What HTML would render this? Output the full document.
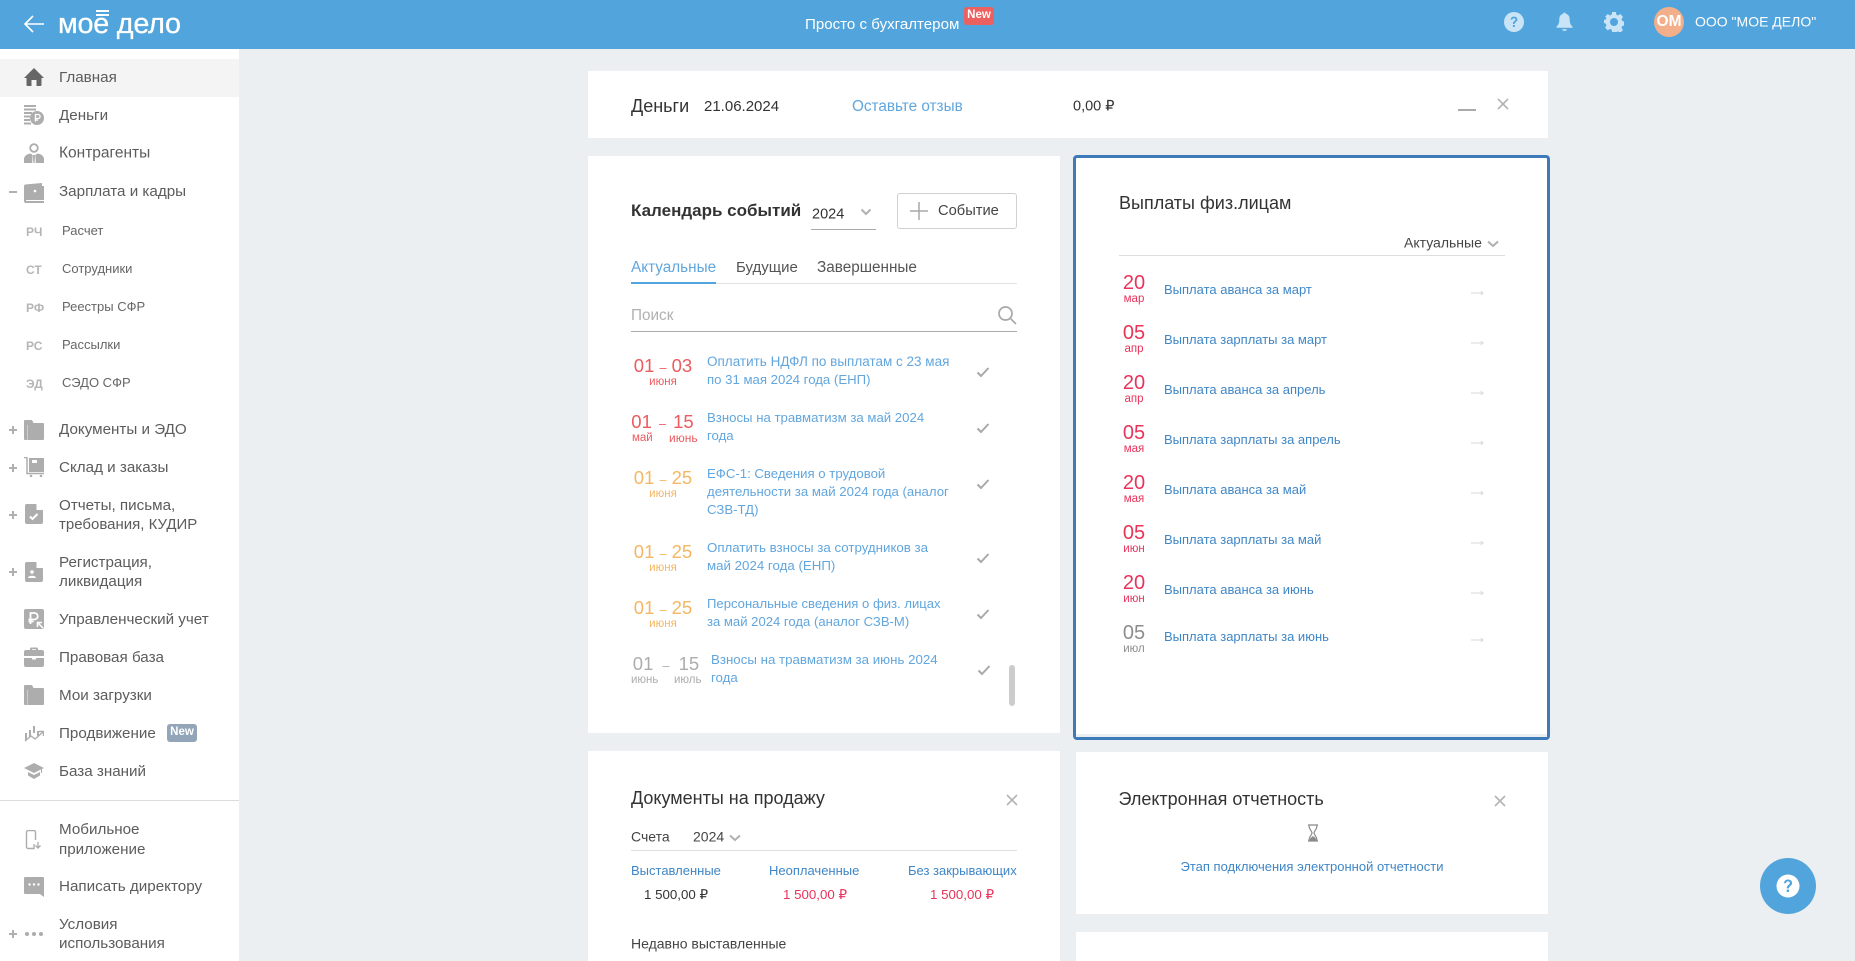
<!DOCTYPE html>
<html lang="ru"><head><meta charset="utf-8"><title>Мое дело</title>
<style>
html,body{margin:0;padding:0;width:1855px;height:961px;overflow:hidden;background:#ebeff2;font-family:"Liberation Sans",sans-serif;color:#333}
.a{position:absolute}
.t{position:absolute;white-space:nowrap;transform:translateY(-50%);line-height:1.2}
.c{transform:translate(-50%,-50%)}
.card{position:absolute;background:#fff}
.n{font-size:15.2px;color:#5c5c5c;left:59px;margin-top:1px}
.s{font-size:13px;color:#666;left:62px}
.k{font-size:12px;color:#b5b5b5;font-weight:bold;left:26px;margin-top:.5px}
.i{position:absolute;left:24px;width:20px;height:20px;fill:#adadad}
.p{position:absolute;left:9px;width:8px;height:2px;background:#b0b0b0}
.p:after{content:"";position:absolute;left:3px;top:-3px;width:2px;height:8px;background:#b0b0b0}
.l{font-size:13.2px;color:#62a6de;line-height:18px;left:707px;transform:none}
.d{font-size:18.5px;text-align:center;margin-top:0}
.d span{font-size:12.5px}
.m{font-size:11.5px;margin-top:1px}
.r{color:#ec5b5f}.o{color:#f4b764}.g{color:#adadad}
.ck{position:absolute;left:976px;width:14px;height:12px;fill:none;stroke:#a8a8a8;stroke-width:2}
.pd{font-size:20px;color:#e8335a;margin-left:1px}
.pm{font-size:11.5px;color:#e8335a;margin-left:1px;margin-top:1px}
.pl{font-size:13px;color:#3f86c6;left:1164px}
.ar{position:absolute;left:1471px;width:13px;height:8px;fill:none;stroke:#d8d8d8;stroke-width:1;margin-top:1px}
.x{position:absolute;width:14px;height:14px;stroke:#b4b4b4;stroke-width:1.6;fill:none}
.chev{position:absolute;width:12px;height:8px;fill:none;stroke:#b0b0b0;stroke-width:2}
</style></head><body>

<!-- header -->
<div class="a" style="left:0;top:0;width:1855px;height:49px;background:#52a5dc"></div>
<svg class="a" style="left:23px;top:13px" width="22" height="22" viewBox="0 0 22 22" fill="none" stroke="#fff" stroke-width="1.6"><path d="M21 11H2M10 3l-8 8 8 8"/></svg>
<div class="t" style="left:58px;top:24px;font-size:28.7px;color:#fff;letter-spacing:-.2px;-webkit-text-stroke:.3px #fff">мое дело</div>
<div class="a" style="left:96px;top:10px;width:13px;height:2px;background:#fff"></div>
<div class="a" style="left:96px;top:14px;width:13px;height:2px;background:#fff"></div>
<div class="t" style="left:805px;top:25px;font-size:15.1px;color:#fff">Просто с бухгалтером</div>
<div class="a" style="left:964px;top:7px;width:30px;height:18px;background:#ec6060;border-radius:3px;color:#fff;font-size:11.5px;font-weight:bold;text-align:center;line-height:17px">New</div>
<svg class="a" style="left:1504px;top:12px" width="20" height="20" viewBox="0 0 20 20"><circle cx="10" cy="10" r="10" fill="#c9e3f7"/><path d="M6.7 7.6C6.8 5.5 8.300 4.600 10 4.600c2 0 3.400 1.100 3.400 2.900 0 2.500-2.700 2.400-2.700 4.500H8.900c0-3 2.600-2.900 2.600-4.500 0-.8-.6-1.300-1.500-1.300-.9 0-1.500.5-1.600 1.400z" fill="#52a5dc"/><rect x="8.900" y="13" width="1.900" height="2" fill="#52a5dc"/></svg>
<svg class="a" style="left:1556px;top:11px" width="17" height="22" viewBox="0 0 17 22" fill="#c9e3f7"><path d="M8.500 1.500c-.8 0-1.300.6-1.300 1.300C4.700 3.400 3.300 5.500 3.300 8.200c0 4-1 5.800-2.800 7.300v1.200h16v-1.200c-1.800-1.500-2.800-3.300-2.800-7.300 0-2.700-1.400-4.800-3.900-5.400 0-.7-.5-1.300-1.300-1.300z"/><path d="M6 18.300h5c-.2 1.100-1.300 1.700-2.500 1.700S6.200 19.400 6 18.300z"/></svg>
<svg class="a" style="left:1604px;top:12px" width="20" height="20" viewBox="0 0 20 20"><path fill="#c9e3f7" d="M8 0h4l.5 2.800 1.700.7L16.600 2l2.800 2.800-1.500 2.400.7 1.800 2.400.5-.0 4-2.400.5-.7 1.700 1.500 2.400-2.800 2.800-2.400-1.500-1.700.7L12 20H8l-.5-2.400-1.700-.7-2.400 1.500L.6 15.600 2.100 13.200l-.7-1.700L-1 11V8l2.400-.5.7-1.800L.6 4.800 3.400 2l2.400 1.500 1.700-.7z" transform="translate(.5 0) scale(.95 1)"/><circle cx="10" cy="10" r="4" fill="#52a5dc"/></svg>
<div class="a" style="left:1654px;top:7px;width:30px;height:30px;border-radius:50%;background:#f3ae8a;color:#fff;font-size:15.500px;font-weight:bold;text-align:center;line-height:30px">ОМ</div>
<div class="t" style="left:1695px;top:22px;font-size:14px;color:#fff">ООО "МОЕ ДЕЛО"</div>

<!-- sidebar -->
<div class="a" style="left:0;top:49px;width:239px;height:912px;background:#fff"></div>
<div class="a" style="left:0;top:59px;width:239px;height:38px;background:#f4f4f4"></div>

<svg class="i" style="top:67px;fill:#666" viewBox="0 0 20 20"><path d="M10 1 20 11h-2.500v7a1 1 0 0 1-1 1h-4v-6h-5v6h-4a1 1 0 0 1-1-1v-7H0z"/></svg>
<div class="t n" style="top:77px">Главная</div>
<svg class="i" style="top:105px" viewBox="0 0 20 20"><path d="M0 0h12v2H0zM0 3.500h12v2H0zM0 7h8v2H0zM0 10.500h6v2H0zM0 14h6v2H0zM0 17.500h7v2H0z"/><circle cx="13" cy="13" r="7"/><path d="M11.500 16.500V9.500h2.600a2 2 0 0 1 0 4h-3.400M10.700 15h3.500" fill="none" stroke="#fff" stroke-width="1.300"/></svg>
<div class="t n" style="top:115px">Деньги</div>
<svg class="i" style="top:143px" viewBox="0 0 20 20"><circle cx="10" cy="5" r="3.800" fill="none" stroke="#adadad" stroke-width="1.800"/><path d="M0 20v-4c0-3 3-5 6.500-5.500L8.700 12 8.200 20zM20 20v-4c0-3-3-5-6.500-5.500L11.300 12l.5 8zM9 12h2l-.3 8H9.300z"/></svg>
<div class="t n" style="top:153px;font-size:15.5px">Контрагенты</div>
<div class="a" style="left:9px;top:191px;width:8px;height:2px;background:#b0b0b0"></div>
<svg class="i" style="top:183px" viewBox="0 0 20 20"><path d="M1 1.500 18 0v3h2v17H2a2 2 0 0 1-2-2V3a2 2 0 0 1 1-1.500z"/><path d="M2 17.500h18" stroke="#fff" stroke-width="1"/><circle cx="11" cy="8" r="1.300" fill="#fff"/></svg>
<div class="t n" style="top:191px">Зарплата и кадры</div>

<div class="t k" style="top:231px">РЧ</div><div class="t s" style="top:231px">Расчет</div>
<div class="t k" style="top:269px">СТ</div><div class="t s" style="top:269px">Сотрудники</div>
<div class="t k" style="top:307px">РФ</div><div class="t s" style="top:307px">Реестры СФР</div>
<div class="t k" style="top:345px">РС</div><div class="t s" style="top:345px">Рассылки</div>
<div class="t k" style="top:383px">ЭД</div><div class="t s" style="top:383px">СЭДО СФР</div>

<div class="p" style="top:429px"></div>
<svg class="i" style="top:420px" viewBox="0 0 20 20"><path d="M1 0h7l1.500 3H19a1 1 0 0 1 1 1v15a1 1 0 0 1-1 1H1a1 1 0 0 1-1-1V1a1 1 0 0 1 1-1z"/><path d="M3.500 5v15" stroke="#ccc" stroke-width="1"/></svg>
<div class="t n" style="top:429px">Документы и ЭДО</div>
<div class="p" style="top:467px"></div>
<svg class="i" style="top:457px" viewBox="0 0 20 20"><path d="M0 .5h3v16h17" fill="none" stroke="#adadad" stroke-width="1.500"/><path d="M5 1h15v14H5z"/><rect x="8" y="3" width="5" height="3" fill="#fff"/><circle cx="7" cy="19" r="1.300"/><circle cx="17" cy="19" r="1.300"/></svg>
<div class="t n" style="top:467px">Склад и заказы</div>
<div class="p" style="top:514px"></div>
<svg class="i" style="top:504px" viewBox="0 0 20 20"><path d="M2.500 0H12l7 6.500V18a2 2 0 0 1-2 2H3a2 2 0 0 1-2-2V2a2 2 0 0 1 1.500-2z"/><path d="M12.500 0v6h6z" fill="#fff"/><path d="M6 12.500l2.500 2.500 5-5" fill="none" stroke="#fff" stroke-width="2"/></svg>
<div class="t n" style="top:505px">Отчеты, письма,</div>
<div class="t n" style="top:524px;font-size:15px">требования, КУДИР</div>
<div class="p" style="top:571px"></div>
<svg class="i" style="top:562px" viewBox="0 0 20 20"><path d="M2.500 0H12l7 6.500V18a2 2 0 0 1-2 2H3a2 2 0 0 1-2-2V2a2 2 0 0 1 1.500-2z"/><path d="M12.500 0v6h6z" fill="#fff"/><circle cx="8" cy="10" r="1.800" fill="#fff"/><path d="M4 16c0-3 8-3 8 0z" fill="#fff"/></svg>
<div class="t n" style="top:562px">Регистрация,</div>
<div class="t n" style="top:581px">ликвидация</div>
<svg class="i" style="top:609px" viewBox="0 0 20 20"><rect width="20" height="20" rx="2"/><path d="M6.500 15V4h4a3 3 0 0 1 0 6.500H4.500M4.500 12.500h5" fill="none" stroke="#fff" stroke-width="1.800"/><path d="M19 19l-5-5M13.500 18v-4.500H18" fill="none" stroke="#fff" stroke-width="1.500"/></svg>
<div class="t n" style="top:619px">Управленческий учет</div>
<svg class="i" style="top:647px" viewBox="0 0 20 20"><path d="M6 3V2a1.500 1.500 0 0 1 1.500-1.500h5A1.500 1.500 0 0 1 14 2v1h4a2 2 0 0 1 2 2v4H0V5a2 2 0 0 1 2-2zM8 3h4V2.300H8zM0 11h8v1.500h4V11h8v7a2 2 0 0 1-2 2H2a2 2 0 0 1-2-2z"/></svg>
<div class="t n" style="top:657px">Правовая база</div>
<svg class="i" style="top:685px" viewBox="0 0 20 20"><path d="M1 0h7l1.500 3H19a1 1 0 0 1 1 1v15a1 1 0 0 1-1 1H1a1 1 0 0 1-1-1V1a1 1 0 0 1 1-1z"/><path d="M3.500 5v15" stroke="#ccc" stroke-width="1"/></svg>
<div class="t n" style="top:695px">Мои загрузки</div>
<svg class="i" style="top:723px" viewBox="0 0 20 20" fill="none"><path d="M2 10v7M6 7v7M10 3v7M14 8v5" stroke="#adadad" stroke-width="2" fill="none"/><path d="M1 18l6-5 4 3 8-7M15 8.500h4.500V13" stroke="#adadad" stroke-width="1.400" fill="none"/></svg>
<div class="t n" style="top:733px">Продвижение</div>
<div class="a" style="left:167px;top:724px;width:30px;height:18px;background:#93a5b8;border-radius:3px;color:#fff;font-size:11.500px;font-weight:bold;text-align:center;line-height:17px">New</div>
<svg class="i" style="top:761px" viewBox="0 0 20 20"><path d="M10 2 20 7l-2 1v4h-1V8.500L10 12 0 7zM4 11l6 3 6-3v3.500L10 18l-6-3.500z"/></svg>
<div class="t n" style="top:771px">База знаний</div>

<div class="a" style="left:0;top:800px;width:239px;height:1px;background:#dcdcdc"></div>

<svg class="i" style="top:830px" viewBox="0 0 20 20"><path d="M10 14v4.500H4a1.500 1.500 0 0 1-1.500-1.500V2A1.500 1.500 0 0 1 4 .5h6A1.500 1.500 0 0 1 11.500 2v8" fill="none" stroke="#adadad" stroke-width="1.400"/><path d="M14 12v6M11.500 15.500 14 18l2.500-2.500" fill="none" stroke="#adadad" stroke-width="1.400"/></svg>
<div class="t n" style="top:829px">Мобильное</div>
<div class="t n" style="top:849px">приложение</div>
<svg class="i" style="top:877px" viewBox="0 0 20 20"><path d="M1 0h18a1 1 0 0 1 1 1v19l-4-3H1a1 1 0 0 1-1-1V1a1 1 0 0 1 1-1z"/><circle cx="5.500" cy="7.500" r="1.200" fill="#fff"/><circle cx="10" cy="7.500" r="1.200" fill="#fff"/><circle cx="14.500" cy="7.500" r="1.200" fill="#fff"/></svg>
<div class="t n" style="top:886px">Написать директору</div>
<div class="p" style="top:933px"></div>
<svg class="i" style="top:924px" viewBox="0 0 20 20"><circle cx="3" cy="10" r="2"/><circle cx="10" cy="10" r="2"/><circle cx="17" cy="10" r="2"/></svg>
<div class="t n" style="top:924px">Условия</div>
<div class="t n" style="top:943px">использования</div>

<!-- top card -->
<div class="card" style="left:588px;top:71px;width:960px;height:67px"></div>
<div class="t" style="left:631px;top:107px;font-size:18px;color:#333">Деньги</div>
<div class="t" style="left:704px;top:107px;font-size:15px;color:#333">21.06.2024</div>
<div class="t" style="left:852px;top:107px;font-size:15.3px;color:#62a6de">Оставьте отзыв</div>
<div class="t" style="left:1073px;top:107px;font-size:14.5px;color:#333">0,00 ₽</div>
<div class="a" style="left:1458px;top:109px;width:18px;height:2px;background:#aaa"></div>
<svg class="x" style="left:1496px;top:97px" viewBox="0 0 14 14"><path d="M2 2l10 10M12 2 2 12"/></svg>

<!-- calendar card -->
<div class="card" style="left:588px;top:156px;width:472px;height:577px"></div>
<div class="t" style="left:631px;top:211px;font-size:17px;font-weight:bold;color:#333">Календарь событий</div>
<div class="t" style="left:812px;top:215px;font-size:14.500px;color:#333">2024</div>
<svg class="chev" style="left:860px;top:208px" viewBox="0 0 12 8"><path d="M1.500 1.500 6 6l4.500-4.500"/></svg>
<div class="a" style="left:811px;top:229px;width:65px;height:1px;background:#aaa"></div>
<div class="a" style="left:897px;top:193px;width:118px;height:34px;border:1px solid #d0d0d0;border-radius:3px"></div>
<svg class="a" style="left:910px;top:202px" width="18" height="18" viewBox="0 0 18 18" stroke="#a8a8a8" stroke-width="1.500"><path d="M9 0v18M0 9h18"/></svg>
<div class="t" style="left:938px;top:212px;font-size:14.700px;color:#444">Событие</div>

<div class="t" style="left:631px;top:268px;font-size:15.300px;color:#62a6de">Актуальные</div>
<div class="t" style="left:736px;top:268px;font-size:15px;color:#555">Будущие</div>
<div class="t" style="left:817px;top:268px;font-size:15.300px;color:#555">Завершенные</div>
<div class="a" style="left:631px;top:283px;width:386px;height:1px;background:#e2e2e2"></div>
<div class="a" style="left:631px;top:282px;width:85px;height:2px;background:#52a5dc"></div>
<div class="t" style="left:631px;top:316px;font-size:15.300px;color:#b0b0b0">Поиск</div>
<svg class="a" style="left:997px;top:305px" width="20" height="20" viewBox="0 0 20 20" fill="none" stroke="#a8a8a8" stroke-width="1.700"><circle cx="8.500" cy="8.500" r="6.500"/><path d="M13.200 13.200 19 19"/></svg>
<div class="a" style="left:631px;top:331px;width:386px;height:1px;background:#aaa"></div>

<div class="t d c r" style="left:663px;top:366px">01 <span>–</span> 03</div>
<div class="t m c r" style="left:663px;top:382px">июня</div>
<div class="t l" style="top:353px"><span style="font-size:13.5px">Оплатить НДФЛ по выплатам с 23 мая</span><br>по 31 мая 2024 года (ЕНП)</div>
<svg class="ck" style="top:366px" viewBox="0 0 14 12"><path d="M1.500 6.500 5 10l7.500-8"/></svg>

<div class="t d c r" style="left:662.500px;top:422px;word-spacing:2px">01 <span>–</span> 15</div>
<div class="t m r" style="left:632px;top:438px">май</div>
<div class="t m r" style="left:669px;top:437px;font-size:12px">июнь</div>
<div class="t l" style="top:409px">Взносы на травматизм за май 2024<br>года</div>
<svg class="ck" style="top:422px" viewBox="0 0 14 12"><path d="M1.500 6.500 5 10l7.500-8"/></svg>

<div class="t d c o" style="left:663px;top:478px">01 <span>–</span> 25</div>
<div class="t m c o" style="left:663px;top:494px">июня</div>
<div class="t l" style="top:465px">ЕФС-1: Сведения о трудовой<br>деятельности за май 2024 года (аналог<br>СЗВ-ТД)</div>
<svg class="ck" style="top:478px" viewBox="0 0 14 12"><path d="M1.500 6.500 5 10l7.500-8"/></svg>

<div class="t d c o" style="left:663px;top:552px">01 <span>–</span> 25</div>
<div class="t m c o" style="left:663px;top:568px">июня</div>
<div class="t l" style="top:539px;font-size:13.300px">Оплатить взносы за сотрудников за<br>май 2024 года (ЕНП)</div>
<svg class="ck" style="top:552px" viewBox="0 0 14 12"><path d="M1.500 6.500 5 10l7.500-8"/></svg>

<div class="t d c o" style="left:663px;top:608px">01 <span>–</span> 25</div>
<div class="t m c o" style="left:663px;top:624px">июня</div>
<div class="t l" style="top:595px;font-size:13.100px">Персональные сведения о физ. лицах<br>за май 2024 года (аналог СЗВ-М)</div>
<svg class="ck" style="top:608px" viewBox="0 0 14 12"><path d="M1.500 6.500 5 10l7.500-8"/></svg>

<div class="t d c g" style="left:666px;top:664px;word-spacing:4px">01 <span>–</span> 15</div>
<div class="t m g" style="left:631px;top:680px">июнь</div>
<div class="t m g" style="left:674px;top:680px">июль</div>
<div class="t l" style="top:651px;left:711px;font-size:13.300px">Взносы на травматизм за июнь 2024<br>года</div>
<svg class="ck" style="top:664px;left:977px" viewBox="0 0 14 12"><path d="M1.500 6.500 5 10l7.500-8"/></svg>
<div class="a" style="left:1009px;top:665px;width:6px;height:41px;background:#ccc;border-radius:3px"></div>

<!-- payments card -->
<div class="a" style="left:1073px;top:155px;width:471px;height:579px;border:3px solid #3d7ab9;border-radius:4px;background:#fff"></div>
<div class="a" style="left:1076px;top:734px;width:471px;height:3px;background:#ebeff2"></div>
<div class="t" style="left:1119px;top:204px;font-size:18px;color:#333">Выплаты физ.лицам</div>
<div class="t" style="left:1404px;top:243px;font-size:14px;color:#444">Актуальные</div>
<svg class="chev" style="left:1487px;top:240px" viewBox="0 0 12 8"><path d="M1 1.500 6 6l5-4.500"/></svg>
<div class="a" style="left:1119px;top:255px;width:386px;height:1px;background:#dedede"></div>

<div class="t pd c" style="left:1133px;top:283px">20</div><div class="t pm c" style="left:1133px;top:299px">мар</div><div class="t pl" style="top:290px">Выплата аванса за март</div><svg class="ar" style="top:288px" viewBox="0 0 14 8"><path d="M0 4h12.500M10.500 2l2.500 2-2.500 2"/></svg>
<div class="t pd c" style="left:1133px;top:333px">05</div><div class="t pm c" style="left:1133px;top:349px">апр</div><div class="t pl" style="top:340px">Выплата зарплаты за март</div><svg class="ar" style="top:338px" viewBox="0 0 14 8"><path d="M0 4h12.500M10.500 2l2.500 2-2.500 2"/></svg>
<div class="t pd c" style="left:1133px;top:383px">20</div><div class="t pm c" style="left:1133px;top:399px">апр</div><div class="t pl" style="top:390px">Выплата аванса за апрель</div><svg class="ar" style="top:388px" viewBox="0 0 14 8"><path d="M0 4h12.500M10.500 2l2.500 2-2.500 2"/></svg>
<div class="t pd c" style="left:1133px;top:433px">05</div><div class="t pm c" style="left:1133px;top:449px">мая</div><div class="t pl" style="top:440px">Выплата зарплаты за апрель</div><svg class="ar" style="top:438px" viewBox="0 0 14 8"><path d="M0 4h12.500M10.500 2l2.500 2-2.500 2"/></svg>
<div class="t pd c" style="left:1133px;top:483px">20</div><div class="t pm c" style="left:1133px;top:499px">мая</div><div class="t pl" style="top:490px">Выплата аванса за май</div><svg class="ar" style="top:488px" viewBox="0 0 14 8"><path d="M0 4h12.500M10.500 2l2.500 2-2.500 2"/></svg>
<div class="t pd c" style="left:1133px;top:533px">05</div><div class="t pm c" style="left:1133px;top:549px">июн</div><div class="t pl" style="top:540px">Выплата зарплаты за май</div><svg class="ar" style="top:538px" viewBox="0 0 14 8"><path d="M0 4h12.500M10.500 2l2.500 2-2.500 2"/></svg>
<div class="t pd c" style="left:1133px;top:583px">20</div><div class="t pm c" style="left:1133px;top:599px">июн</div><div class="t pl" style="top:590px">Выплата аванса за июнь</div><svg class="ar" style="top:588px" viewBox="0 0 14 8"><path d="M0 4h12.500M10.500 2l2.500 2-2.500 2"/></svg>
<div class="t pd c" style="left:1133px;top:633px;color:#8d8d8d">05</div><div class="t pm c" style="left:1133px;top:649px;color:#8d8d8d">июл</div><div class="t pl" style="top:637px">Выплата зарплаты за июнь</div><svg class="ar" style="top:635px" viewBox="0 0 14 8"><path d="M0 4h12.500M10.500 2l2.500 2-2.500 2"/></svg>

<!-- documents card -->
<div class="card" style="left:588px;top:751px;width:472px;height:210px"></div>
<div class="t" style="left:631px;top:799px;font-size:18px;color:#333">Документы на продажу</div>
<svg class="x" style="left:1005px;top:793px" viewBox="0 0 14 14"><path d="M2 2l10 10M12 2 2 12"/></svg>
<div class="t" style="left:631px;top:837px;font-size:14px;color:#444">Счета</div>
<div class="t" style="left:693px;top:837px;font-size:14px;color:#444">2024</div>
<svg class="chev" style="left:729px;top:834px" viewBox="0 0 12 8"><path d="M1 1.500 6 6l5-4.500"/></svg>
<div class="a" style="left:631px;top:850px;width:386px;height:1px;background:#dedede"></div>
<div class="t" style="left:631px;top:871px;font-size:13px;color:#3f86c6">Выставленные</div>
<div class="t" style="left:769px;top:871px;font-size:13px;color:#3f86c6">Неоплаченные</div>
<div class="t" style="left:908px;top:871px;font-size:13px;color:#3f86c6">Без закрывающих</div>
<div class="t" style="left:644px;top:895px;font-size:13.300px;color:#333">1 500,00 ₽</div>
<div class="t" style="left:783px;top:895px;font-size:13.300px;color:#e8335a">1 500,00 ₽</div>
<div class="t" style="left:930px;top:895px;font-size:13.300px;color:#e8335a">1 500,00 ₽</div>
<div class="t" style="left:631px;top:944px;font-size:14px;color:#444">Недавно выставленные</div>

<!-- e-report card -->
<div class="card" style="left:1076px;top:752px;width:472px;height:162px"></div>
<div class="t" style="left:1118.500px;top:800px;font-size:18px;color:#333">Электронная отчетность</div>
<svg class="x" style="left:1493px;top:794px" viewBox="0 0 14 14"><path d="M2 2l10 10M12 2 2 12"/></svg>
<svg class="a" style="left:1307px;top:824px" width="12" height="18" viewBox="0 0 12 18" fill="none" stroke="#8a8a8a" stroke-width="1.200"><path d="M1 1h10M1 17h10M2 1c0 5 3 6 3 8s-3 3-3 8M10 1c0 5-3 6-3 8s3 3 3 8"/><path d="M2.500 17c0-3 2.500-4 3.500-5 1 1 3.500 2 3.500 5z" fill="#8a8a8a" stroke="none"/></svg>
<div class="t c" style="left:1312px;top:867px;font-size:13px;color:#3f86c6">Этап подключения электронной отчетности</div>

<div class="card" style="left:1076px;top:932px;width:472px;height:29px"></div>

<!-- help fab -->
<div class="a" style="left:1760px;top:858px;width:56px;height:56px;border-radius:50%;background:#52a5dc"></div>
<svg class="a" style="left:1776px;top:874px" width="24" height="24" viewBox="0 0 24 24"><circle cx="12" cy="12" r="11.500" fill="#fff"/><path d="M8 9.200C8.200 6.700 9.900 5.500 12 5.500c2.500 0 4.100 1.400 4.100 3.500 0 3-3.200 2.900-3.200 5.400h-2.200c0-3.600 3.100-3.500 3.100-5.400 0-1-.7-1.600-1.800-1.600-1.100 0-1.800.6-1.900 1.700z" fill="#52a5dc"/><rect x="10.700" y="15.600" width="2.300" height="2.400" fill="#52a5dc"/></svg>

</body></html>
